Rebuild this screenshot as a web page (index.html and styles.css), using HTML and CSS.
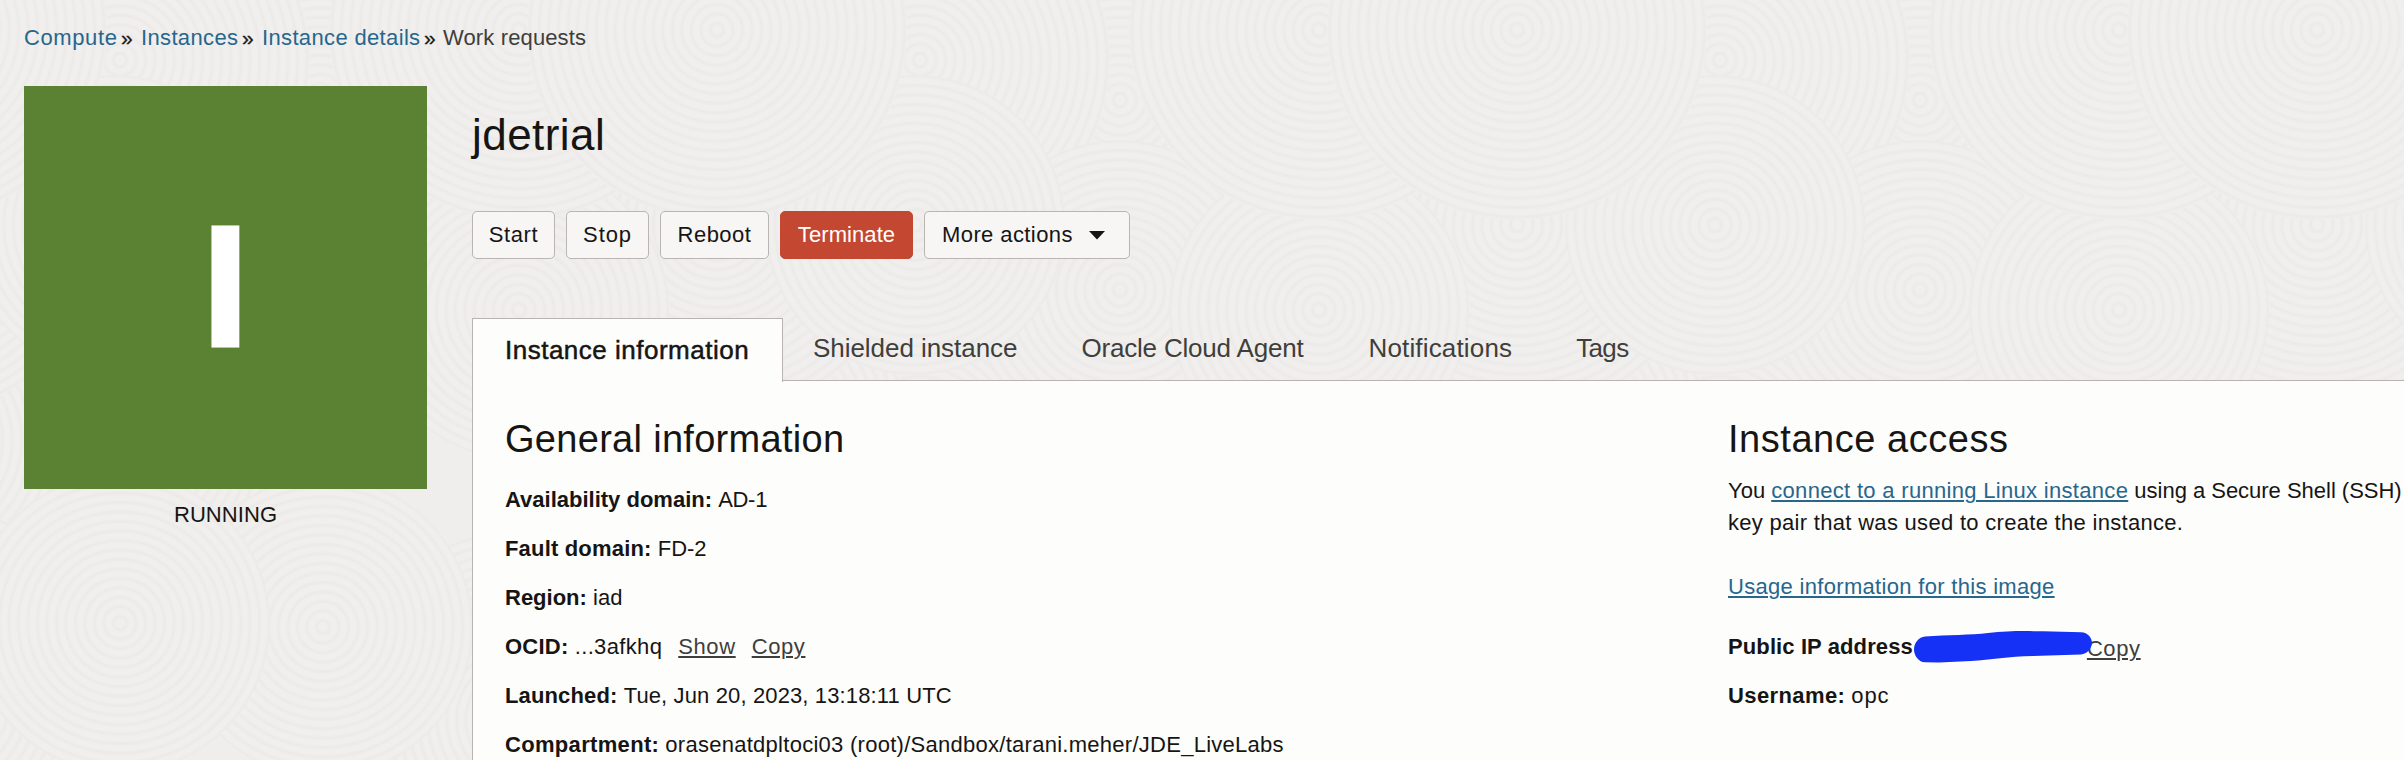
FILE: index.html
```html
<!DOCTYPE html>
<html lang="en">
<head>
<meta charset="utf-8">
<title>jdetrial - Instance details</title>
<link rel="stylesheet" href="styles.css">
</head>
<body>
<svg class="backdrop" width="2404" height="760" aria-hidden="true">
  <defs>
    <radialGradient id="rings" gradientUnits="userSpaceOnUse" cx="0" cy="0" r="9.5" spreadMethod="repeat">
      <stop offset="0" stop-color="#f0efed"/>
      <stop offset="0.4" stop-color="#f0efed"/>
      <stop offset="0.7" stop-color="#ebeae8"/>
      <stop offset="1" stop-color="#f0efed"/>
    </radialGradient>
    <circle id="disc" r="150" fill="url(#rings)"/>
    <circle id="wide" r="190" fill="url(#rings)"/>
    <pattern id="swirl" width="800" height="800" patternUnits="userSpaceOnUse">
      <rect width="800" height="800" fill="#efeeec"/>
      <use href="#wide" x="120" y="440"/>
      <use href="#wide" x="920" y="440"/>
      <use href="#wide" x="720" y="440"/>
      <use href="#wide" x="-80" y="440"/>
      <use href="#wide" x="520" y="720"/>
      <use href="#wide" x="720" y="690"/>
      <use href="#wide" x="-80" y="690"/>
      <use href="#wide" x="320" y="100"/>
      <use href="#wide" x="120" y="60"/>
      <use href="#wide" x="920" y="60"/>
      <use href="#wide" x="717" y="225"/>
      <use href="#wide" x="-83" y="225"/>
      <use href="#disc" x="320" y="290"/>
      <use href="#disc" x="519" y="310"/>
      <use href="#disc" x="115" y="225"/>
      <use href="#disc" x="915" y="225"/>
      <use href="#wide" x="519" y="30"/>
      <use href="#wide" x="717" y="30"/>
      <use href="#wide" x="-83" y="30"/>
      <use href="#disc" x="323" y="627"/>
      <use href="#disc" x="120" y="623"/>
      <use href="#disc" x="920" y="623"/>
    </pattern>
  </defs>
  <rect width="2404" height="760" fill="url(#swirl)"/>
</svg>

<nav class="breadcrumb">
  <a class="crumb-compute">Compute</a><span class="sep">»</span>
  <a class="crumb-instances">Instances</a><span class="sep">»</span>
  <a class="crumb-details">Instance details</a><span class="sep">»</span>
  <span class="crumb-current">Work requests</span>
</nav>

<div class="page">
  <aside class="status">
    <div class="tile">I</div>
    <div class="state">RUNNING</div>
  </aside>

  <main class="main">
    <h1>jdetrial</h1>
    <div class="actions">
      <button class="btn start">Start</button>
      <button class="btn stop">Stop</button>
      <button class="btn reboot">Reboot</button>
      <button class="btn terminate">Terminate</button>
      <button class="btn more">More actions
        <svg width="16" height="9" viewBox="0 0 16 9"><path d="M0 0h16L8 8.6z" fill="#161513"/></svg>
      </button>
    </div>

    <div class="tabs">
      <div class="tab active">Instance information</div>
      <div class="tab">Shielded instance</div>
      <div class="tab agent">Oracle Cloud Agent</div>
      <div class="tab notes">Notifications</div>
      <div class="tab tags">Tags</div>
    </div>

    <div class="panel">
      <section class="general">
        <h2>General information</h2>
        <div class="row"><b class="k-avail">Availability domain:</b> <span class="v-ad">AD-1</span></div>
        <div class="row"><b class="k-fault">Fault domain:</b> <span>FD-2</span></div>
        <div class="row"><b>Region:</b> <span>iad</span></div>
        <div class="row"><b class="k-ocid">OCID:</b> <span class="v-ocid">...3afkhq</span><a class="mini show">Show</a><a class="mini copy">Copy</a></div>
        <div class="row"><b class="k-launched">Launched:</b> <span class="v-date">Tue, Jun 20, 2023, 13:18:11 UTC</span></div>
        <div class="row"><b class="k-comp">Compartment:</b> <span class="v-comp">orasenatdpltoci03 (root)/Sandbox/tarani.meher/JDE_LiveLabs</span></div>
      </section>
      <section class="access">
        <h2>Instance access</h2>
        <p>You <a class="link">connect to a running Linux instance</a> <span class="ssh">using a Secure Shell (SSH)</span><br><span class="key">key pair that was used to create the instance.</span></p>
        <p class="usage"><a class="link">Usage information for this image</a></p>
        <div class="row ip"><b class="k-ip">Public IP address</b><a class="mini ip-copy">Copy</a>
          <svg class="scribble" width="180" height="34" viewBox="0 0 180 34"><path d="M12 6.5C35 5 58 5 75 3 95 .8 110 1 130 1.3L168 2.3C175 2.500 179 8 179 13 178.500 19 174 24 168 24.500L120 26C95 26.500 78 29.500 58 31L26 32.500 12 32.300C5 32 1 25 1 19.500 1 13 6 6.800 12 6.500Z" fill="#1431f5"/></svg>
        </div>
        <div class="row"><b class="k-user">Username:</b> <span class="v-user">opc</span></div>
      </section>
    </div>
  </main>
</div>
</body>
</html>
```
FILE: styles.css
```css
* { box-sizing: border-box; }
html, body { margin: 0; height: 760px; overflow: hidden; }
body {
  position: relative;
  background: #efeeec;
  color: #161513;
  font: 22px/30px "Liberation Sans", Arial, sans-serif;
}
.backdrop { position: absolute; inset: 0; z-index: -1; }

.breadcrumb { display: flex; height: 86px; padding: 23px 24px 0; }
.breadcrumb a { color: #27668d; }
.sep { width: 24px; padding-left: 4px; font-size: 21px; line-height: 30px; -webkit-text-stroke: 0.3px #161513; }
.crumb-compute { width: 93px; letter-spacing: 0.6px; }
.crumb-instances { width: 97px; letter-spacing: 0.35px; }
.crumb-details { width: 158px; letter-spacing: 0.35px; white-space: nowrap; }
.crumb-current { color: #403e3b; margin-left: -1px; letter-spacing: 0.13px; }

.page { display: flex; }
.status { flex: none; width: 472px; padding-left: 24px; }
.tile {
  display: flex; align-items: center; justify-content: center;
  width: 403px; height: 403px; padding-bottom: 4px;
  background: #5a8232; color: #fff;
  font-size: 172px; font-weight: bold; line-height: 1;
  -webkit-text-stroke: 3px #fff;
}
.state { width: 403px; margin-top: 11px; text-align: center; letter-spacing: 0.07px; }

.main { flex: 1; min-width: 0; padding-top: 24px; }
h1 { margin: 0; font-size: 44px; font-weight: normal; line-height: 50px; letter-spacing: 0.45px; }
.actions { display: flex; gap: 11px; margin-top: 51px; }
.btn {
  height: 48px; padding: 0; border: 1px solid #b8b5b2; border-radius: 5px;
  background: #f7f6f5; color: #161513; font: inherit; line-height: 46px; text-align: center;
}
.start { width: 83px; letter-spacing: 0.6px; }
.stop { width: 83px; letter-spacing: 0.9px; }
.reboot { width: 109px; letter-spacing: 0.5px; }
.terminate { width: 133px; letter-spacing: 0.08px; background: #c44731; border-color: #c44731; color: #fff; }
.more { display: flex; align-items: center; gap: 16px; width: 206px; padding-left: 17px; letter-spacing: 0.41px; }

.tabs { position: relative; display: flex; gap: 64px; height: 63px; margin-top: 59px; color: #403e3b; font-size: 26px; }
.tab { padding-top: 15px; letter-spacing: -0.05px; white-space: nowrap; }
.tab.active {
  flex: none; width: 311px; height: 64px; margin-right: -34px; padding: 16px 0 0 32px;
  background: #fdfdfc; border: 1px solid #b9b3af; border-bottom: 0;
  color: #161513; letter-spacing: 0.5px; -webkit-text-stroke: 0.5px #161513;
}
.tab.agent { letter-spacing: -0.19px; }
.tab.notes { margin-left: 1px; letter-spacing: 0.16px; }
.tab.tags { letter-spacing: -0.64px; }

.panel {
  display: flex; height: 380px; margin-top: -1px; padding: 35px 0 0 32px;
  background: #fdfdfc; border: solid #b9b3af; border-width: 1px 0 0 1px;
}
.general { flex: none; width: 1223px; }
.access { flex: none; width: 676px; }
h2 { margin: 0 0 13px; font-size: 38px; font-weight: normal; line-height: 46px; letter-spacing: 0.3px; }
.access h2 { letter-spacing: 0.54px; }
.row { height: 49px; line-height: 49px; white-space: nowrap; }
.k-fault { letter-spacing: 0.18px; }
.k-ocid { letter-spacing: 0.25px; }
.k-launched { letter-spacing: 0.14px; }
.k-comp { letter-spacing: 0.32px; }
.k-ip { letter-spacing: 0.11px; }
.k-user { letter-spacing: 0.39px; }
.v-ad { letter-spacing: -0.3px; }
.v-ocid { letter-spacing: 0.35px; }
.v-date { letter-spacing: 0.13px; }
.v-comp { letter-spacing: 0.27px; }
.v-user { letter-spacing: 0.8px; }

.mini, .link { text-decoration: underline 2px; text-underline-offset: 2px; }
.mini { color: #403e3b; letter-spacing: 0.6px; }
.show { margin-left: 16px; }
.copy { margin-left: 16px; }

p { margin: 0; line-height: 32px; white-space: nowrap; }
.link { color: #27668d; letter-spacing: 0.31px; }
.ssh { letter-spacing: -0.02px; }
.key { letter-spacing: 0.3px; }
.usage { margin: 32px 0 19px; }
.ip { position: relative; }
.ip-copy { position: relative; top: 2px; margin-left: 174px; }
.scribble { position: absolute; left: 185px; top: 8px; }
```
